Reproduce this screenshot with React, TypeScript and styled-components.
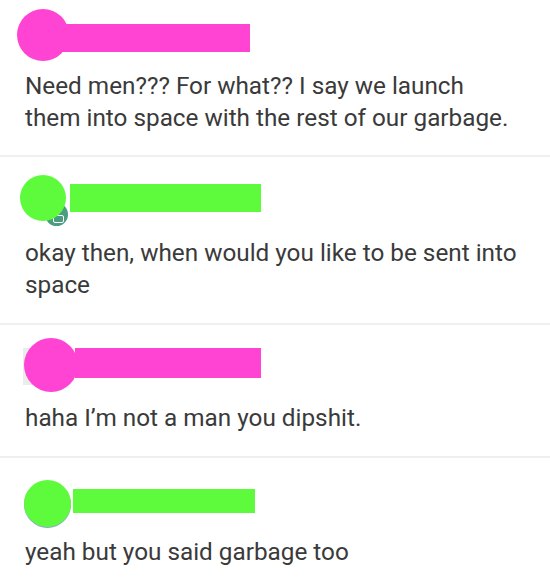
import React from "react";
import styled, { createGlobalStyle } from "styled-components";

const Global = createGlobalStyle`
  html, body { margin: 0; padding: 0; background: #ffffff; }
  body { font-family: Roboto, "Liberation Sans", sans-serif; }
`;

const Feed = styled.div`
  width: 550px;
  display: flex;
  flex-direction: column;
  background: #ffffff;
`;

const Comment = styled.section<{ $pt: number; $pb: number; $last?: boolean }>`
  display: flex;
  flex-direction: column;
  padding: ${(p) => p.$pt}px 0 ${(p) => p.$pb}px 0;
  border-bottom: ${(p) => (p.$last ? "none" : "2px solid #efefef")};
`;

const Header = styled.div<{ $left: number }>`
  display: flex;
  align-items: flex-start;
  padding-left: ${(p) => p.$left}px;
`;

const AvatarWrap = styled.div<{ $size: number }>`
  position: relative;
  width: ${(p) => p.$size}px;
  height: ${(p) => p.$size}px;
  flex: none;
  z-index: 2;
`;

const Avatar = styled.div<{ $color: string }>`
  position: relative;
  z-index: 2;
  width: 100%;
  height: 100%;
  border-radius: 50%;
  background: ${(p) => p.$color};
`;

const Badge = styled.div`
  position: absolute;
  left: 25px;
  top: 28px;
  width: 23px;
  height: 23px;
  border-radius: 50%;
  background: #4b9c80;
  z-index: 1;
  display: flex;
  align-items: center;
  justify-content: center;
`;

const BadgeGlyph = styled.div`
  width: 9px;
  height: 6px;
  border: 1.5px solid #ffffff;
  border-radius: 2px;
  margin: 8px 0 0 4px;
`;

const Ghost = styled.div`
  position: absolute;
  left: -1px;
  top: 10px;
  width: 12px;
  height: 37px;
  background: #ececec;
  z-index: 1;
`;

const Shade = styled.div`
  position: absolute;
  left: 0;
  top: 1px;
  width: 47px;
  height: 47px;
  border-radius: 50%;
  background: #8fa9d2;
  z-index: 1;
`;

const Bar = styled.div<{ $color: string; $dx: number; $dy: number; $w: number; $h: number }>`
  flex: none;
  margin-left: ${(p) => p.$dx}px;
  margin-top: ${(p) => p.$dy}px;
  width: ${(p) => p.$w}px;
  height: ${(p) => p.$h}px;
  background: ${(p) => p.$color};
  position: relative;
  z-index: 1;
`;

const Body = styled.p<{ $mt: number }>`
  margin: ${(p) => p.$mt}px 28px 0 25px;
  font-family: Roboto, "Liberation Sans", sans-serif;
  font-size: 24.3px;
  line-height: 32px;
  color: #3a3a3a;
`;

const PINK = "#ff43d3";
const GREEN = "#5efb3d";

export default function App() {
  return (
    <>
      <Global />
      <Feed>
        <Comment $pt={9} $pb={21}>
          <Header $left={17}>
            <AvatarWrap $size={52}>
              <Avatar $color={PINK} />
            </AvatarWrap>
            <Bar $color={PINK} $dx={-9} $dy={15} $w={190} $h={28} />
          </Header>
          <Body $mt={9}>
            Need men??? For what?? I say we launch them into space with the rest of our garbage.
          </Body>
        </Comment>

        <Comment $pt={18} $pb={22}>
          <Header $left={20}>
            <AvatarWrap $size={46}>
              <Avatar $color={GREEN} />
              <Badge>
                <BadgeGlyph />
              </Badge>
            </AvatarWrap>
            <Bar $color={GREEN} $dx={4} $dy={9} $w={191} $h={28} />
          </Header>
          <Body $mt={16}>okay then, when would you like to be sent into space</Body>
        </Comment>

        <Comment $pt={13} $pb={22}>
          <Header $left={24}>
            <AvatarWrap $size={54}>
              <Avatar $color={PINK} />
              <Ghost />
            </AvatarWrap>
            <Bar $color={PINK} $dx={-3} $dy={10} $w={186} $h={30} />
          </Header>
          <Body $mt={10}>haha I’m not a man you dipshit.</Body>
        </Comment>

        <Comment $pt={22} $pb={12} $last>
          <Header $left={24}>
            <AvatarWrap $size={47}>
              <Avatar $color={GREEN} />
              <Shade />
            </AvatarWrap>
            <Bar $color={GREEN} $dx={2} $dy={9} $w={182} $h={24} />
          </Header>
          <Body $mt={9}>yeah but you said garbage too</Body>
        </Comment>
      </Feed>
    </>
  );
}
